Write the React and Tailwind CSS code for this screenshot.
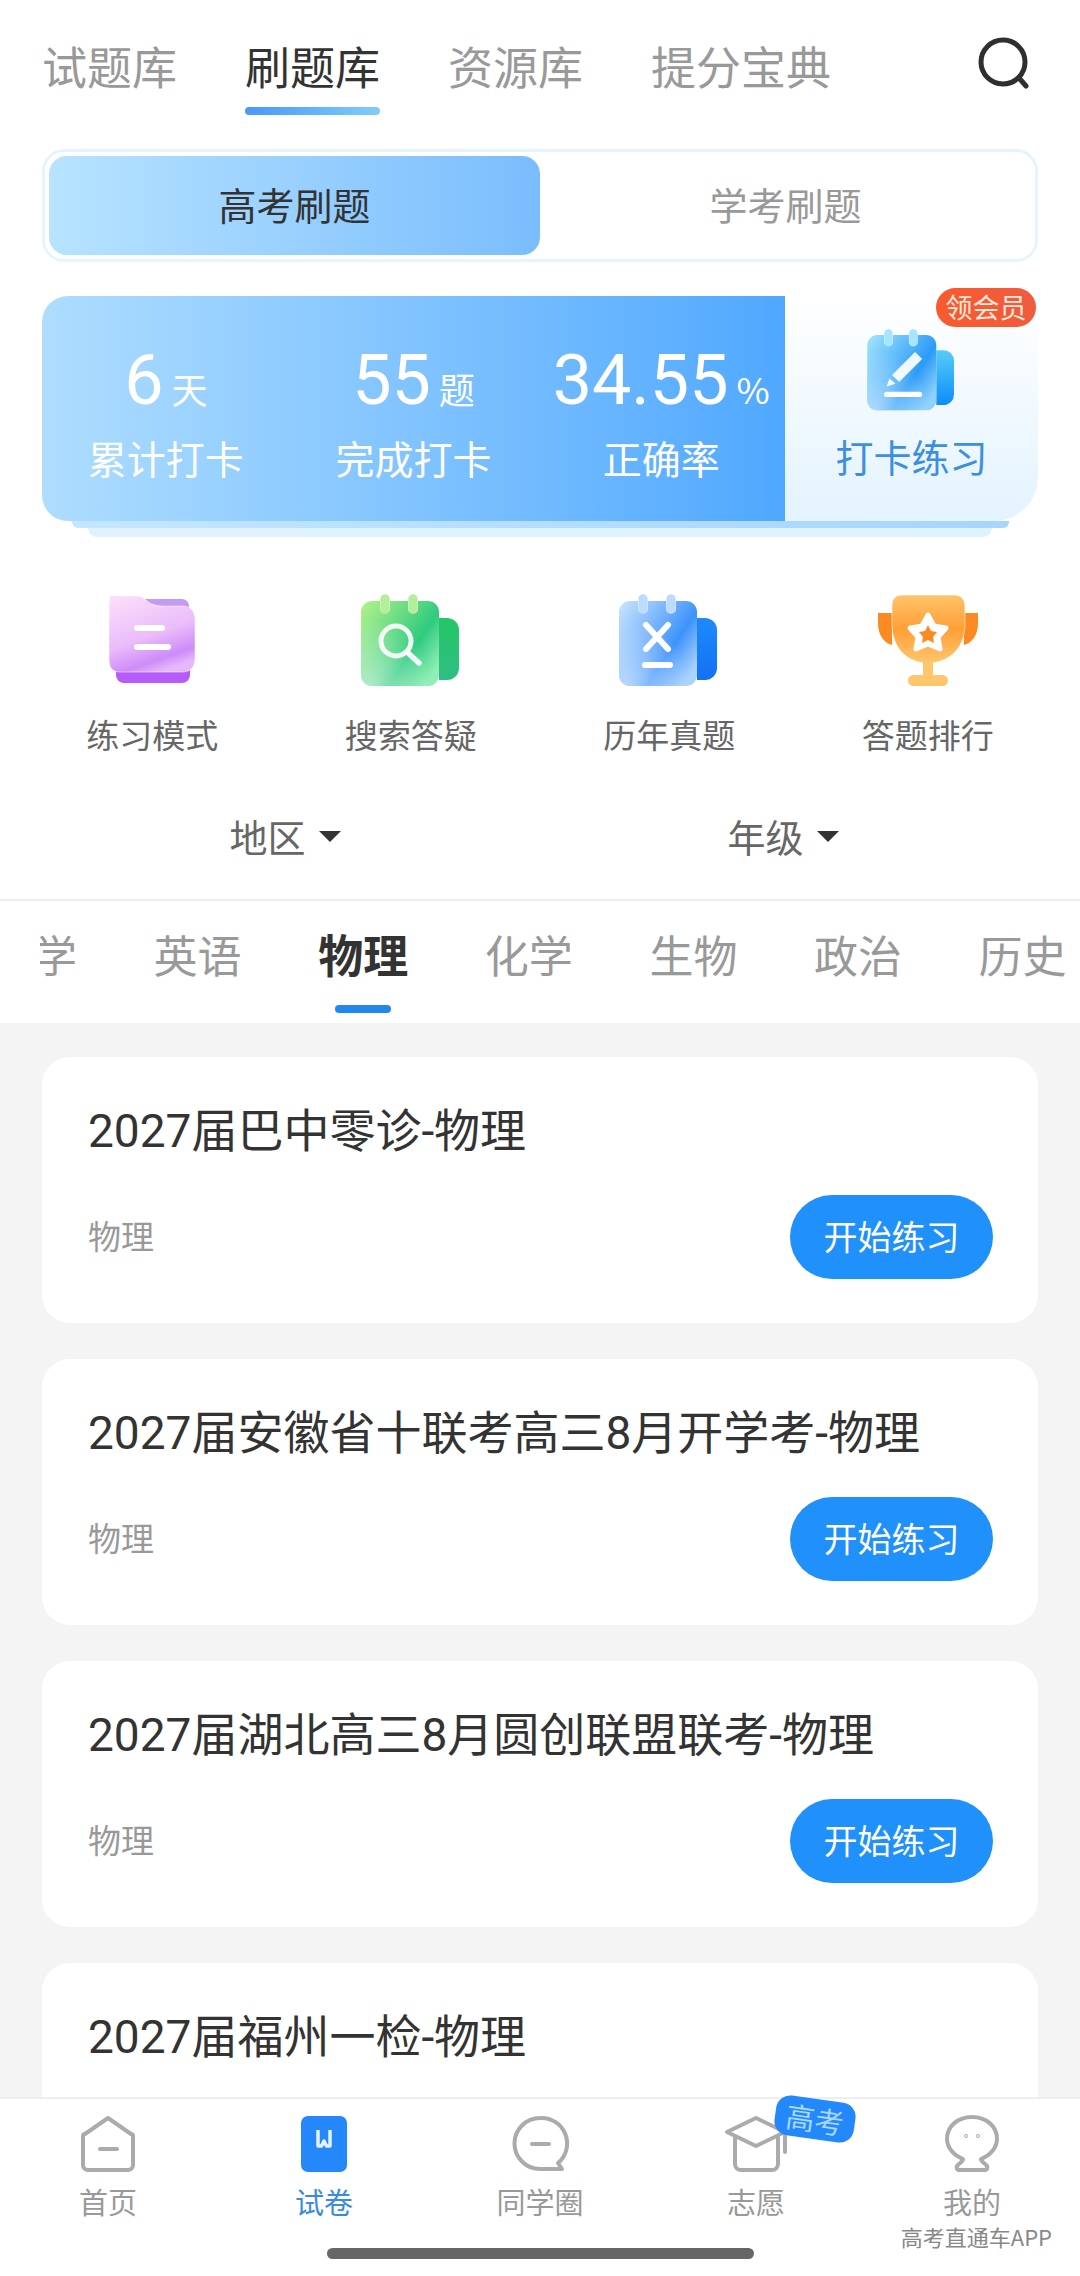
import React from 'react';

const TOP_TABS = ['试题库', '刷题库', '资源库', '提分宝典'];
const SUBJECTS = ['数学', '英语', '物理', '化学', '生物', '政治', '历史', '地理'];
const PAPERS = [
    '2027届巴中零诊-物理',
    '2027届安徽省十联考高三8月开学考-物理',
    '2027届湖北高三8月圆创联盟联考-物理',
    '2027届福州一检-物理',
];

const BODY_PATH = 'M11 8h8v8a5 5 0 0 0 10 0V8h18v8a5 5 0 0 0 10 0V8h10a11 11 0 0 1 11 11v63a11 11 0 0 1-11 11H11A11 11 0 0 1 0 82V19A11 11 0 0 1 11 8z';

// notepad shaped icon shared by the quick entries
const NoteIcon = ({ id, from, via, to, ring, tabFrom, tabTo, width = 100, height = 96, children }) => (
    <svg width={width} height={height} viewBox="0 0 100 96">
        <defs>
            <linearGradient id={`${id}-body`} x1="0" y1="0" x2="1" y2="0.75">
                <stop offset="0" stopColor={from} />
                <stop offset="0.7" stopColor={via} />
                <stop offset="1" stopColor={to} />
            </linearGradient>
            <radialGradient id={`${id}-glow`} cx="0.1" cy="1" r="0.8">
                <stop offset="0" stopColor="#ffffff" stopOpacity="0.55" />
                <stop offset="1" stopColor="#ffffff" stopOpacity="0" />
            </radialGradient>
            <linearGradient id={`${id}-tab`} x1="0" y1="0" x2="0" y2="1">
                <stop offset="0" stopColor={tabFrom} />
                <stop offset="1" stopColor={tabTo} />
            </linearGradient>
        </defs>
        <path d="M78 25h8a12 12 0 0 1 12 12v38a12 12 0 0 1-12 12h-8z" fill={`url(#${id}-tab)`} />
        <rect x="19" y="1" width="10" height="21" rx="5" fill={ring} stroke="#ffffff" strokeOpacity="0.6" />
        <rect x="47" y="1" width="10" height="21" rx="5" fill={ring} stroke="#ffffff" strokeOpacity="0.6" />
        <path d={BODY_PATH} fill={`url(#${id}-body)`} />
        <path d={BODY_PATH} fill={`url(#${id}-glow)`} />
        {children}
    </svg>
);

const FolderIcon = () => (
    <svg width="100" height="96" viewBox="0 0 100 96">
        <defs>
            <linearGradient id="folder-body" x1="0.2" y1="0" x2="0.6" y2="1">
                <stop offset="0" stopColor="#fbdcfb" />
                <stop offset="0.55" stopColor="#eabcfa" />
                <stop offset="0.85" stopColor="#cd8cf8" />
                <stop offset="1" stopColor="#e6b8fb" />
            </linearGradient>
        </defs>
        <path d="M42 6h38a7 7 0 0 1 7 7v10H50z" fill="#c49bf2" />
        <path d="M14 70h74v12a8 8 0 0 1-8 8H22a8 8 0 0 1-8-8z" fill="#b75cfb" />
        <path d="M8 3h28c6 0 8 6 14 8 6 3 20 2 30 2 8 0 13 5 13 13v39c0 11-6 14-13 14H18C10 79 7 74 7 66V12c0-5 1-9 1-9z" fill="url(#folder-body)" stroke="#ffffff" strokeOpacity="0.5" />
        <rect x="32" y="32" width="31" height="6" rx="3" fill="#ffffff" />
        <rect x="32" y="51" width="37" height="6" rx="3" fill="#ffffff" />
    </svg>
);

const TrophyIcon = () => (
    <svg width="100" height="96" viewBox="0 0 100 96">
        <defs>
            <linearGradient id="cup-body" x1="0" y1="0" x2="0" y2="1">
                <stop offset="0" stopColor="#ffc469" />
                <stop offset="0.5" stopColor="#ff9f38" />
                <stop offset="1" stopColor="#ffc66c" />
            </linearGradient>
        </defs>
        <path d="M0 20h14v32C6 50 0 42 0 30z" fill="#fb8a22" />
        <path d="M100 20H86v32c8-2 14-10 14-22z" fill="#fb8a22" />
        <path d="M24 2h52c8 0 11 5 11 12v17c0 26-18 39-37 39S14 57 14 31V14C14 7 16 2 24 2z" fill="url(#cup-body)" stroke="#ffffff" strokeOpacity="0.5" />
        <rect x="45" y="68" width="10" height="16" fill="#ffc66c" />
        <rect x="30" y="82" width="40" height="11" rx="5.5" fill="#ffc66c" />
        <path d="M50 22l6 11 12 2-8 9 2 12-12-5-12 5 2-12-8-9 12-2z" fill="#ffffff" stroke="#ffffff" strokeWidth="5" strokeLinejoin="round" />
        <path d="M50 32l3 6 6 1-4 5 1 6-6-3-6 3 1-6-4-5 6-1z" fill="#fb8a22" />
    </svg>
);

const ENTRIES = [
    { label: '练习模式', icon: <FolderIcon /> },
    {
        label: '搜索答疑',
        icon: (
            <NoteIcon id="search" from="#b6f38a" via="#2fcb80" to="#8eefb4" ring="#b5ee9a" tabFrom="#25c765" tabTo="#2fbd84">
                <circle cx="35" cy="48" r="15" fill="none" stroke="#ffffff" strokeWidth="5" strokeOpacity="0.9" />
                <path d="M46 59l12 11" stroke="#ffffff" strokeWidth="5.5" strokeLinecap="round" strokeOpacity="0.9" />
            </NoteIcon>
        ),
    },
    {
        label: '历年真题',
        icon: (
            <NoteIcon id="exam" from="#cfe6ff" via="#3d93fb" to="#a9d2fd" ring="#bcdcff" tabFrom="#1d8bfb" tabTo="#1470f6">
                <path d="M27 32l22 24M49 32L27 56" stroke="#ffffff" strokeWidth="6" strokeLinecap="round" />
                <rect x="23" y="69" width="31" height="6" rx="3" fill="#ffffff" />
            </NoteIcon>
        ),
    },
    { label: '答题排行', icon: <TrophyIcon /> },
];

const Tri = () => <span className="w-0 h-0 border-x-[11px] border-x-transparent border-t-[11px] border-t-[#333333] mt-[2px]" />;

const Stat = ({ value, unit, label }) => (
    <div className="flex flex-col items-center">
        <div className="h-[76px] flex items-baseline justify-center whitespace-nowrap">
            <span className="font-['Roboto'] text-[70px] leading-[76px]">{value}</span>
            <span className="text-[36px] leading-[36px] ml-[8px]">{unit}</span>
        </div>
        <div className="text-[39px] leading-[44px] mt-[17px]">{label}</div>
    </div>
);

const PaperCard = ({ title }) => (
    <div className="bg-white rounded-[28px] h-[266px] shrink-0 pl-[46px] pr-[45px] pt-[44px]">
        <div className="text-[46px] leading-[60px] text-[#333333] font-['Roboto','Noto_Sans_CJK_SC',sans-serif] whitespace-nowrap">{title}</div>
        <div className="flex items-center justify-between mt-[34px]">
            <span className="text-[33px] text-[#999999] pb-[2px]">物理</span>
            <div className="w-[203px] h-[84px] pb-[3px] rounded-full bg-[#2090fb] text-white text-[34px] flex items-center justify-center">开始练习</div>
        </div>
    </div>
);

const NavIcon = ({ children }) => (
    <svg width="64" height="60" viewBox="0 0 64 60" fill="none" stroke="#ababab" strokeWidth="4" strokeLinecap="round" strokeLinejoin="round">
        {children}
    </svg>
);

const NAV = [
    {
        label: '首页',
        icon: (
            <NavIcon>
                <path d="M32 4L55 20a2 2 0 0 1 2 2v29a5 5 0 0 1-5 5H12a5 5 0 0 1-5-5V22a2 2 0 0 1 2-2z" />
                <path d="M24 35h17" />
            </NavIcon>
        ),
    },
    {
        label: '试卷',
        active: true,
        icon: (
            <svg width="64" height="60" viewBox="0 0 64 60">
                <rect x="9" y="2" width="46" height="56" rx="7" fill="#2488fb" />
                <path d="M26 16v16h3.500l2.500-5 2.500 5H38V16" fill="none" stroke="#e4f2ff" strokeWidth="3.500" strokeLinejoin="round" />
            </svg>
        ),
    },
    {
        label: '同学圈',
        icon: (
            <NavIcon>
                <path d="M32 4a25.500 25.500 0 1 0 0 51h22l-4-6a25.500 25.500 0 0 0-18-45z" />
                <path d="M24 30h17" />
            </NavIcon>
        ),
    },
    {
        label: '志愿',
        icon: (
            <NavIcon>
                <path d="M32 4L3 18l29 14 29-14z" />
                <path d="M11 24v26a6 6 0 0 0 6 6h31a6 6 0 0 0 6-6V24" />
                <path d="M61 22v16" />
            </NavIcon>
        ),
    },
    {
        label: '我的',
        icon: (
            <NavIcon>
                <path d="M23 45C13 41 7 33 7 25 7 12 18 3 32 3s25 9 25 22c0 8-6 16-16 20 0 3 4 4 6 7 1 2 0 4-2 4H19c-2 0-3-2-2-4 2-3 6-4 6-7z" />
                <circle cx="26" cy="22" r="0.5" strokeWidth="3" />
                <circle cx="38" cy="22" r="0.5" strokeWidth="3" />
            </NavIcon>
        ),
    },
];

const App = () => {
    return (
        <div className="relative w-[1080px] h-[2276px] overflow-hidden bg-white flex flex-col font-['Noto_Sans_CJK_SC',sans-serif]">
            {/* Top tabs */}
            <div className="h-[149px] shrink-0 flex justify-between pl-[42px] pr-[49px] pt-[36px]">
                <div className="flex gap-[68px]">
                    {TOP_TABS.map((tab, i) => (
                        <div key={tab} className="flex flex-col">
                            <div className={`text-[45px] leading-[60px] ${i === 1 ? 'text-[#333333]' : 'text-[#999999]'}`}>{tab}</div>
                            {i === 1 && <div className="h-[8px] mt-[11px] rounded-full bg-gradient-to-r from-[#4a97f8] to-[#7fcdfb]" />}
                        </div>
                    ))}
                </div>
                <svg width="54" height="54" viewBox="0 0 54 54" fill="none" stroke="#2f2f2f" strokeWidth="5" strokeLinecap="round">
                    <circle cx="26" cy="26" r="22" />
                    <path d="M42 42l7 8" />
                </svg>
            </div>

            {/* Segmented control */}
            <div className="mx-[42px] h-[113px] shrink-0 rounded-[22px] border-[3px] border-[#e6f5fc] p-[4px] flex">
                <div className="flex-1 pb-[5px] rounded-[18px] bg-gradient-to-r from-[#b7e3ff] to-[#7abdfd] flex items-center justify-center text-[38px] text-[#333333]">高考刷题</div>
                <div className="flex-1 pb-[5px] flex items-center justify-center text-[38px] text-[#999999]">学考刷题</div>
            </div>

            {/* Stats card */}
            <div className="mx-[42px] mt-[34px] h-[225px] shrink-0 flex">
                <div className="w-[743px] rounded-l-[26px] bg-gradient-to-r from-[#aeddff] to-[#4fa8ff] grid grid-cols-3 pt-[46px] text-white">
                    <Stat value="6" unit="天" label="累计打卡" />
                    <Stat value="55" unit="题" label="完成打卡" />
                    <Stat value="34.55" unit="%" label="正确率" />
                </div>
                <div className="relative flex-1 rounded-br-[44px] bg-gradient-to-b from-[#ffffff] to-[#e3f3ff] flex flex-col items-center pt-[32px]">
                    <div className="absolute right-[2px] -top-[8px] w-[100px] h-[39px] rounded-full bg-gradient-to-r from-[#f95a2e] to-[#ef5c3d] text-[#ffe9de] text-[27px] leading-[37px] text-center">领会员</div>
                    <NoteIcon id="pen" from="#a5e6fd" via="#2b9bf7" to="#8fd2fd" ring="#a5e6fd" tabFrom="#56cdf8" tabTo="#0d8df8" width={89} height={85}>
                        <path d="M54 27l8 8-26 26-8-8zM25 57l7 6-10 3z" fill="#ffffff" fillOpacity="0.92" />
                        <rect x="19" y="72" width="43" height="6" rx="3" fill="#ffffff" />
                    </NoteIcon>
                    <div className="text-[38px] leading-[44px] text-[#3c8fe0] mt-[21px]">打卡练习</div>
                </div>
            </div>
            <div className="ml-[72px] mr-[71px] h-[7px] shrink-0 rounded-b-[6px] bg-gradient-to-r from-[#c3e7ff] to-[#a7d5fb]" />
            <div className="mx-[88px] h-[9px] shrink-0 rounded-b-[12px] bg-[#dff2ff]" />

            {/* Quick entries */}
            <div className="grid grid-cols-4 px-[23px] mt-[56px] shrink-0">
                {ENTRIES.map((entry) => (
                    <div key={entry.label} className="flex flex-col items-center">
                        <div className="h-[96px]">{entry.icon}</div>
                        <div className="text-[33px] leading-[40px] text-[#666666] mt-[25px]">{entry.label}</div>
                    </div>
                ))}
            </div>

            {/* Filters */}
            <div className="grid grid-cols-2 pl-[36px] pr-[48px] mt-[18px] h-[127px] shrink-0">
                {['地区', '年级'].map((name) => (
                    <div key={name} className="flex items-center justify-center gap-[13px] text-[38px] text-[#666666]">
                        {name}
                        <Tri />
                    </div>
                ))}
            </div>

            {/* Subjects */}
            <div className="h-[124px] shrink-0 border-t-2 border-[#eeeeee] pl-[40px]">
                <div className="h-full overflow-hidden">
                    <div className="flex gap-[76.6px] -ml-[51px] pt-[23px] w-[1300px]">
                        {SUBJECTS.map((name) => (
                            <div key={name} className="flex flex-col items-center shrink-0">
                                <div className={`leading-[60px] ${name === '物理' ? 'text-[45px] font-bold text-[#333333]' : 'text-[44px] text-[#999999]'}`}>{name}</div>
                                {name === '物理' && <div className="w-[56px] h-[8px] mt-[21px] rounded-full bg-[#2288f0]" />}
                            </div>
                        ))}
                    </div>
                </div>
            </div>

            {/* Paper list */}
            <div className="flex-1 min-h-0 overflow-hidden bg-[#f4f4f4] px-[42px] pt-[34px] flex flex-col gap-[36px]">
                {PAPERS.map((title) => (
                    <PaperCard key={title} title={title} />
                ))}
            </div>

            {/* Bottom nav */}
            <div className="relative h-[179px] shrink-0 bg-white border-t-2 border-[#eeeeee] grid grid-cols-5 pt-[15px]">
                {NAV.map((item) => (
                    <div key={item.label} className="relative flex flex-col items-center">
                        {item.icon}
                        <div className={`text-[29px] leading-[36px] mt-[9px] ${item.active ? 'text-[#3a8ae0]' : 'text-[#999999]'}`}>{item.label}</div>
                        {item.label === '志愿' && (
                            <div className="absolute left-[127px] -top-[15px] w-[80px] h-[40px] rounded-[14px] rotate-[8deg] bg-[#2288fb] text-[#a8d8ff] text-[29px] leading-[38px] text-center">高考</div>
                        )}
                    </div>
                ))}
                <div className="absolute right-[28px] top-[126px] text-[22px] leading-[22px] text-[#888888]">高考直通车APP</div>
                <div className="absolute left-[327px] bottom-[17px] w-[427px] h-[11px] rounded-full bg-[#666666]" />
            </div>
        </div>
    );
};

export default App;
